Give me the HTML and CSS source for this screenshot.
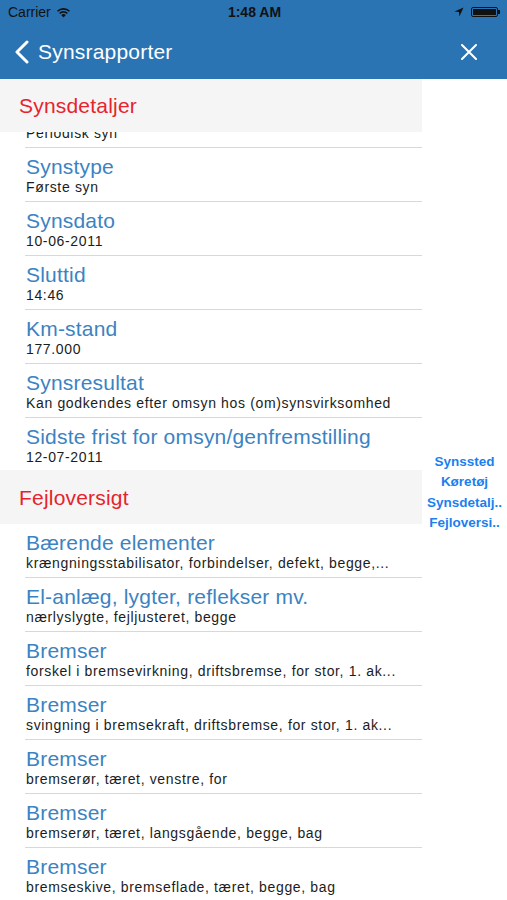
FILE: index.html
```html
<!DOCTYPE html>
<html lang="da">
<head>
    <meta charset="UTF-8">
    <meta name="viewport" content="width=device-width, initial-scale=1.0">
    <title>Synsrapporter</title>
    <link rel="stylesheet" href="styles.css">
</head>
<body>
    <!-- Header: status bar + navigation -->
    <header class="topbar">
        <div class="status">
            <div class="status-left">
                <span>Carrier</span>
                <svg class="wifi" width="15" height="11" viewBox="0 0 15 11">
                    <path d="M7.5 10.5 L5.2 8.1 A3.3 3.3 0 0 1 9.8 8.1 Z" fill="#111"/>
                    <path d="M3.6 6.5 A5.6 5.6 0 0 1 11.4 6.5" stroke="#111" stroke-width="1.6" fill="none"/>
                    <path d="M1.5 4.3 A8.6 8.6 0 0 1 13.5 4.3" stroke="#111" stroke-width="1.6" fill="none"/>
                </svg>
            </div>
            <div class="status-time">1:48 AM</div>
            <div class="status-right">
                <svg width="10" height="10" viewBox="0 0 10 10">
                    <path d="M9.5 0.5 L0.5 4.6 L5 5 L5.4 9.5 Z" fill="#111"/>
                </svg>
                <div class="battery"><div class="battery-fill"></div></div>
            </div>
        </div>
        <div class="navbar">
            <div class="back">
                <svg width="16" height="24" viewBox="0 0 16 24">
                    <path d="M13 2 L3 12 L13 22" stroke="#fff" stroke-width="3" fill="none" stroke-linecap="round" stroke-linejoin="round"/>
                </svg>
                <span>Synsrapporter</span>
            </div>
            <svg class="close" width="16" height="16" viewBox="0 0 16 16">
                <path d="M1 1 L15 15 M15 1 L1 15" stroke="#fff" stroke-width="2" stroke-linecap="round"/>
            </svg>
        </div>
    </header>

    <main class="content">
        <div class="table">
            <div class="section-head first">Synsdetaljer</div>
            <div class="row tucked">
                <div class="title">Synsart</div>
                <div class="sub">Periodisk syn</div>
            </div>
            <div class="row">
                <div class="title">Synstype</div>
                <div class="sub">Første syn</div>
            </div>
            <div class="row">
                <div class="title">Synsdato</div>
                <div class="sub">10-06-2011</div>
            </div>
            <div class="row">
                <div class="title">Sluttid</div>
                <div class="sub">14:46</div>
            </div>
            <div class="row">
                <div class="title">Km-stand</div>
                <div class="sub">177.000</div>
            </div>
            <div class="row">
                <div class="title">Synsresultat</div>
                <div class="sub">Kan godkendes efter omsyn hos (om)synsvirksomhed</div>
            </div>
            <div class="row last">
                <div class="title">Sidste frist for omsyn/genfremstilling</div>
                <div class="sub">12-07-2011</div>
            </div>

            <div class="section-head">Fejloversigt</div>
            <div class="row">
                <div class="title">Bærende elementer</div>
                <div class="sub">krængningsstabilisator, forbindelser, defekt, begge,...</div>
            </div>
            <div class="row">
                <div class="title">El-anlæg, lygter, reflekser mv.</div>
                <div class="sub">nærlyslygte, fejljusteret, begge</div>
            </div>
            <div class="row">
                <div class="title">Bremser</div>
                <div class="sub">forskel i bremsevirkning, driftsbremse, for stor, 1. ak...</div>
            </div>
            <div class="row">
                <div class="title">Bremser</div>
                <div class="sub">svingning i bremsekraft, driftsbremse, for stor, 1. ak...</div>
            </div>
            <div class="row">
                <div class="title">Bremser</div>
                <div class="sub">bremserør, tæret, venstre, for</div>
            </div>
            <div class="row">
                <div class="title">Bremser</div>
                <div class="sub">bremserør, tæret, langsgående, begge, bag</div>
            </div>
            <div class="row">
                <div class="title">Bremser</div>
                <div class="sub">bremseskive, bremseflade, tæret, begge, bag</div>
            </div>
        </div>

        <!-- Section index -->
        <nav class="index">
            <span>Synssted</span>
            <span>Køretøj</span>
            <span>Synsdetalj..</span>
            <span>Fejloversi..</span>
        </nav>
    </main>
</body>
</html>
```

FILE: styles.css
```css
body {
    margin: 0;
    padding: 0;
    height: 900px;
    overflow: hidden;
    background: #fff;
    font-family: "Liberation Sans", Arial, sans-serif;
}

.topbar {
    background: #2b74b4;
    height: 79px;
}

.status {
    height: 24px;
    display: flex;
    align-items: center;
    justify-content: space-between;
    padding: 0 6px 0 8px;
    font-size: 14px;
    color: #111;
}

.status-left {
    display: flex;
    align-items: center;
    gap: 5px;
    width: 120px;
}

.status-time {
    font-weight: bold;
}

.status-right {
    display: flex;
    align-items: center;
    justify-content: flex-end;
    gap: 7px;
    width: 120px;
}

.battery {
    width: 27px;
    height: 10px;
    border: 1px solid #111;
    border-radius: 2px;
    padding: 1px;
    box-sizing: border-box;
    position: relative;
    margin-right: 3px;
}

.battery::after {
    content: "";
    position: absolute;
    right: -3px;
    top: 2px;
    width: 2px;
    height: 4px;
    background: #111;
}

.battery-fill {
    height: 100%;
    background: #111;
}

.navbar {
    height: 55px;
    display: flex;
    align-items: center;
    justify-content: space-between;
    padding: 0 30px 0 14px;
    color: #fff;
}

.back {
    display: flex;
    align-items: center;
    gap: 8px;
    font-size: 21px;
    letter-spacing: 0.2px;
}

.content {
    display: flex;
}

.table {
    width: 422px;
}

.section-head {
    position: relative;
    z-index: 1;
    height: 54px;
    display: flex;
    align-items: center;
    padding: 2px 0 0 19px;
    box-sizing: border-box;
    background: #f5f5f5;
    color: #e7232b;
    font-size: 21px;
    letter-spacing: 0.2px;
}

.section-head.first {
    height: 53px;
    padding-top: 0;
}

.row {
    height: 54px;
    box-sizing: border-box;
    margin-left: 25px;
    padding: 7px 0 0 1px;
    border-bottom: 1px solid #c9dbec;
    white-space: nowrap;
    overflow: hidden;
}

.row.tucked {
    margin-top: -38px;
}

.row.last {
    height: 52px;
    border-bottom: none;
}

.title {
    color: #3b83c2;
    font-size: 21px;
    letter-spacing: 0.2px;
    line-height: 24px;
}

.sub {
    color: #1c1c1c;
    font-size: 14px;
    letter-spacing: 0.65px;
    line-height: 16px;
}

.index {
    flex: 1;
    height: 821px;
    padding-top: 6px;
    box-sizing: border-box;
    display: flex;
    flex-direction: column;
    justify-content: center;
    align-items: center;
    color: #1b7ff0;
    font-size: 13.5px;
    font-weight: bold;
    line-height: 20.3px;
}
```
